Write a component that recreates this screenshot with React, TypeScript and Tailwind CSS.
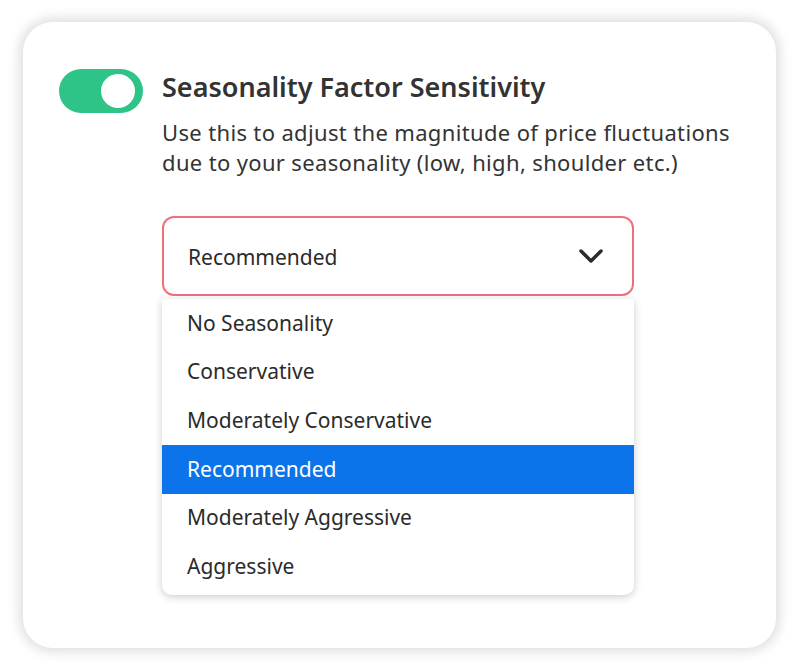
import React from 'react';

const options = [
  'No Seasonality',
  'Conservative',
  'Moderately Conservative',
  'Recommended',
  'Moderately Aggressive',
  'Aggressive',
];

export default function App() {
  const selected = 'Recommended';

  return (
    <div
      className="w-[799px] h-[671px] bg-white pt-[22px] pl-[23px]"
      style={{ fontFamily: '"Noto Sans", "Open Sans", sans-serif' }}
    >
      <div className="w-[753px] h-[626px] bg-white rounded-[30px] shadow-[0_0_12px_4px_rgba(0,0,0,0.13)] pt-[47px] pl-[36px]">
        <div className="flex">
          {/* Toggle */}
          <div className="w-[84px] h-[44px] rounded-full bg-[#2ec387] flex items-center justify-end pr-[8px] shrink-0">
            <div className="w-[34px] h-[34px] rounded-full bg-white" />
          </div>

          <div className="ml-[19px]">
            <h2 className="text-[27px] leading-[36px] font-semibold text-[#333]">
              Seasonality Factor Sensitivity
            </h2>
            <p className="text-[22px] leading-[30px] tracking-[0.35px] text-[#333] mt-[12px]">
              Use this to adjust the magnitude of price fluctuations
              <br />
              due to your seasonality (low, high, shoulder etc.)
            </p>

            {/* Select */}
            <div className="mt-[39px] w-[472px]">
              <div className="h-[80px] border-2 border-[#f0707a] rounded-[12px] flex items-center justify-between pl-[24px] pr-[28px]">
                <span className="text-[21px] text-[#2b2b2b] pt-[4px]">{selected}</span>
                <svg width="26" height="16" viewBox="0 0 26 16" fill="none">
                  <path d="M3 3l10 10L23 3" stroke="#2b2b2b" strokeWidth="3.5" strokeLinecap="round" strokeLinejoin="round" />
                </svg>
              </div>

              <ul className="mt-[3px] pb-[4px] bg-white rounded-b-[10px] rounded-t-[4px] shadow-[0_2px_8px_rgba(0,0,0,0.2)] overflow-hidden">
                {options.map((opt) => (
                  <li
                    key={opt}
                    className={`h-[48.7px] flex items-center pl-[25px] text-[21px] ${
                      opt === selected ? 'bg-[#0b74eb] text-white' : 'text-[#2b2b2b]'
                    }`}
                  >
                    {opt}
                  </li>
                ))}
              </ul>
            </div>
          </div>
        </div>
      </div>
    </div>
  );
}
